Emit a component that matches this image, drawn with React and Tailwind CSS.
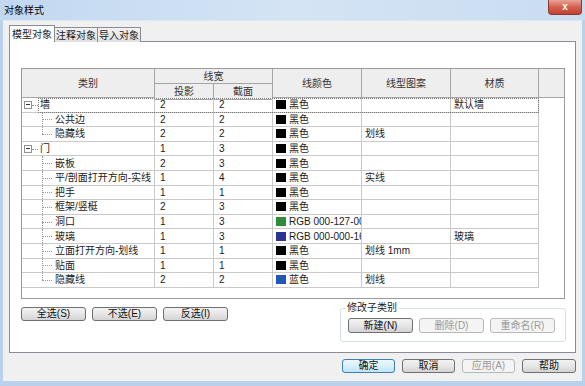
const rows = [
  { name: '墙', lv: 0, p: '2', s: '2', c: '#000000', cn: '黑色', pat: '', mat: '默认墙' },
  { name: '公共边', lv: 1, p: '2', s: '2', c: '#000000', cn: '黑色', pat: '', mat: '' },
  { name: '隐藏线', lv: 1, last: true, p: '2', s: '2', c: '#000000', cn: '黑色', pat: '划线', mat: '' },
  { name: '门', lv: 0, p: '1', s: '3', c: '#000000', cn: '黑色', pat: '', mat: '' },
  { name: '嵌板', lv: 1, p: '2', s: '3', c: '#000000', cn: '黑色', pat: '', mat: '' },
  { name: '平/剖面打开方向-实线', lv: 1, p: '1', s: '4', c: '#000000', cn: '黑色', pat: '实线', mat: '' },
  { name: '把手', lv: 1, p: '1', s: '1', c: '#000000', cn: '黑色', pat: '', mat: '' },
  { name: '框架/竖梃', lv: 1, p: '2', s: '3', c: '#000000', cn: '黑色', pat: '', mat: '' },
  { name: '洞口', lv: 1, p: '1', s: '3', c: '#2f8a3c', cn: 'RGB 000-127-000', pat: '', mat: '' },
  { name: '玻璃', lv: 1, p: '1', s: '3', c: '#28348f', cn: 'RGB 000-000-160', pat: '', mat: '玻璃' },
  { name: '立面打开方向-划线', lv: 1, p: '1', s: '1', c: '#000000', cn: '黑色', pat: '划线 1mm', mat: '' },
  { name: '贴面', lv: 1, p: '1', s: '1', c: '#000000', cn: '黑色', pat: '', mat: '' },
  { name: '隐藏线', lv: 1, last: true, p: '2', s: '2', c: '#2357b5', cn: '蓝色', pat: '划线', mat: '' },
];

const cell = 'h-full border-r border-b border-[#c9c9c9] flex items-center overflow-hidden whitespace-nowrap';

function Btn({ children, w = 'w-[65px]', h = 'h-[14px]', kind }) {
  let look = 'border-[#707070] bg-gradient-to-b from-[#f3f3f3] via-[#e6e6e6] to-[#d3d3d3] text-[#111]';
  if (kind === 'default') look = 'border-[#3c7fb1] bg-gradient-to-b from-[#eef7fd] via-[#d9effc] to-[#bfe3f8] text-[#111]';
  if (kind === 'disabled') look = 'border-[#b5b9bc] bg-[#f4f4f4] text-[#9a9a9a]';
  return (
    <div className={`${w} ${h} border rounded-[3px] flex items-center justify-center text-[10px] leading-none ${look}`}>
      {children}
    </div>
  );
}

function TreeCell({ r }) {
  if (r.lv === 0) {
    return (
      <div className={`${cell} relative`}>
        <span className="absolute left-[2px] top-1/2 -translate-y-1/2 w-[8px] h-[8px] border border-[#919191] bg-white flex items-center justify-center">
          <span className="w-[4px] h-px bg-[#333]"></span>
        </span>
        <span className="absolute left-[10px] top-1/2 w-[6px] border-t border-dotted border-[#999]"></span>
        <span className="pl-[18px]">{r.name}</span>
      </div>
    );
  }
  return (
    <div className={`${cell} relative`}>
      <span className={`absolute left-[20px] top-0 border-l border-dotted border-[#999] ${r.last ? 'h-1/2' : 'h-full'}`}></span>
      <span className="absolute left-[20px] top-1/2 w-[10px] border-t border-dotted border-[#999]"></span>
      <span className="pl-[33px]">{r.name}</span>
    </div>
  );
}

export default function App() {
  return (
    <div
      className="w-[585px] h-[386px] flex flex-col bg-[#b9d1ea] text-[10px] text-[#1b1b1b] relative overflow-hidden"
      style={{ fontFamily: '"Liberation Sans", "Noto Sans CJK SC", sans-serif' }}
    >
      <div className="h-[20px] flex items-center pl-[4px] bg-gradient-to-r from-[#c2d8f0] via-[#d4e4f5] to-[#c9dcf1] text-[10px] text-black">
        对象样式
      </div>
      <div className="absolute top-0 right-[3px] w-[34px] h-[15px] rounded-b-[4px] border border-t-0 border-[#8a3a30] bg-gradient-to-b from-[#e8a497] via-[#d4604f] to-[#c2412f] flex items-center justify-center text-white text-[10px] font-bold leading-none">
        x
      </div>

      <div className="flex-1 mx-[3px] mb-[5px] bg-[#f0f0f0] border-t border-[#dfe7f0] flex flex-col">
        {/* tabs */}
        <div className="flex items-end h-[17px] mt-[4px] ml-[6px] relative z-10">
          <div className="h-[17px] w-[46px] bg-white border border-b-0 border-[#898c95] flex items-center justify-center">模型对象</div>
          <div className="h-[15px] w-[43px] bg-gradient-to-b from-[#f2f2f2] to-[#e0e0e0] border border-l-0 border-b-0 border-[#898c95] flex items-center justify-center">注释对象</div>
          <div className="h-[15px] w-[43px] bg-gradient-to-b from-[#f2f2f2] to-[#e0e0e0] border border-l-0 border-b-0 border-[#898c95] flex items-center justify-center">导入对象</div>
        </div>

        {/* panel */}
        <div className="ml-[6px] -mt-px w-[567px] h-[312px] bg-white border border-[#898c95] pl-[11px] pt-[26px] flex flex-col">
          <div className="w-[544px] h-[231px] border border-[#9a9a9a] bg-white flex flex-col">
            {/* header */}
            <div className="flex h-[29px] bg-[#eeeeee] text-[#333] shrink-0">
              <div className="w-[133px] h-full border-r border-b border-[#a5a5a5] flex items-center justify-center">类别</div>
              <div className="w-[118px] h-full flex flex-col">
                <div className="h-[15px] border-r border-b border-[#a5a5a5] flex items-center justify-center">线宽</div>
                <div className="flex-1 flex">
                  <div className="w-[59px] border-r border-b border-[#a5a5a5] flex items-center justify-center">投影</div>
                  <div className="w-[59px] border-r border-b border-[#a5a5a5] flex items-center justify-center">截面</div>
                </div>
              </div>
              <div className="w-[89px] h-full border-r border-b border-[#a5a5a5] flex items-center justify-center">线颜色</div>
              <div className="w-[89px] h-full border-r border-b border-[#a5a5a5] flex items-center justify-center">线型图案</div>
              <div className="w-[88px] h-full border-r border-b border-[#a5a5a5] flex items-center justify-center">材质</div>
              <div className="w-[25px] h-full border-b border-[#a5a5a5]"></div>
            </div>

            {/* rows */}
            {rows.map((r, i) => (
              <div key={i} className="grid grid-cols-[133px_59px_59px_89px_89px_88px_25px] h-[14.6px] relative shrink-0">
                <TreeCell r={r} />
                <div className={`${cell} pl-[5px]`}>{r.p}</div>
                <div className={`${cell} pl-[5px]`}>{r.s}</div>
                <div className={`${cell} pl-[3px]`}>
                  <span className="w-[10px] h-[9px] shrink-0 mr-[3px]" style={{ backgroundColor: r.c }}></span>
                  <span>{r.cn}</span>
                </div>
                <div className={`${cell} pl-[3px]`}>{r.pat}</div>
                <div className={`${cell} pl-[3px]`}>{r.mat}</div>
                <div className="h-full"></div>
                {i === 0 && (
                  <div className="absolute left-[16px] top-0 w-[501px] h-full border border-dotted border-[#7a7a7a] pointer-events-none"></div>
                )}
              </div>
            ))}
          </div>

          {/* lower controls */}
          <div className="w-[545px] flex justify-between mt-[8px]">
            <div className="flex gap-[6px] h-[14px]">
              <Btn>全选(S)</Btn>
              <Btn>不选(E)</Btn>
              <Btn>反选(I)</Btn>
            </div>
            <div className="relative w-[226px] h-[34px] mt-px border border-[#d5dfe5] rounded-[3px] pl-[7px] pt-[9px]">
              <span className="absolute -top-[8px] left-[5px] bg-white px-px text-[10px] leading-[14px]">修改子类别</span>
              <div className="flex gap-[6px]">
                <Btn h="h-[15px]">新建(N)</Btn>
                <Btn h="h-[15px]" kind="disabled">删除(D)</Btn>
                <Btn h="h-[15px]" kind="disabled">重命名(R)</Btn>
              </div>
            </div>
          </div>
        </div>

        {/* dialog buttons */}
        <div className="flex justify-end gap-[7px] pr-[6px] mt-[6px]">
          <Btn w="w-[53px]" kind="default">确定</Btn>
          <Btn w="w-[53px]">取消</Btn>
          <Btn w="w-[53px]" kind="disabled">应用(A)</Btn>
          <Btn w="w-[54px]">帮助</Btn>
        </div>
      </div>
    </div>
  );
}
